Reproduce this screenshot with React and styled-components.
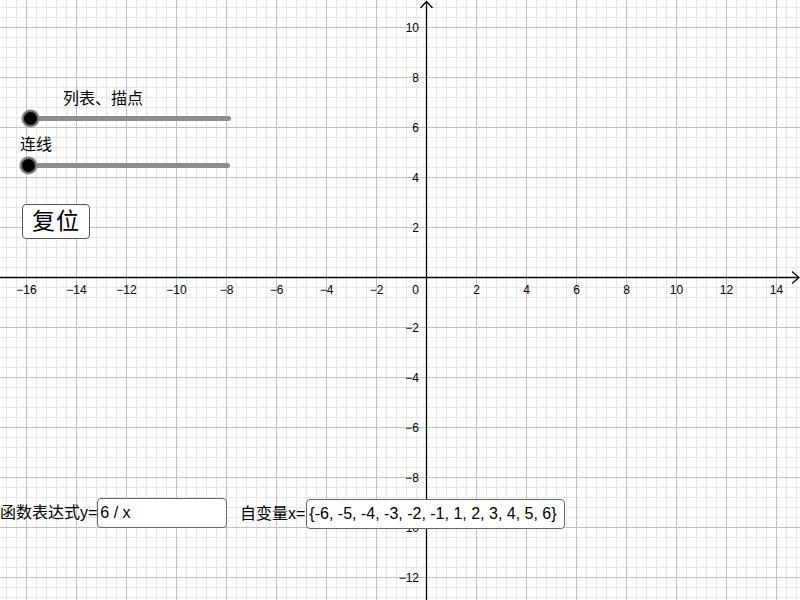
import React from "react";
import styled, { createGlobalStyle } from "styled-components";

const Global = createGlobalStyle`
  html, body { margin: 0; padding: 0; background: #fff; overflow: hidden; }
  body { font-family: "Liberation Sans", "Noto Sans CJK SC", sans-serif; }
`;

const FONT = `"Liberation Sans", "Noto Sans CJK SC", sans-serif`;

const Canvas = styled.div`
  position: relative;
  width: 800px;
  height: 600px;
  background: #fff;
  overflow: hidden;
  font-family: ${FONT};
  color: #000;
`;

const GraphSvg = styled.svg`
  position: absolute;
  inset: 0;
  display: block;
`;

const SliderBox = styled.div`
  position: absolute;
  left: ${(p) => p.$left}px;
  top: ${(p) => p.$top}px;
  width: 230px;
`;

const SliderLabel = styled.div`
  font-size: 16px;
  line-height: 20px;
  height: 20px;
  padding-left: ${(p) => p.$indent}px;
  white-space: nowrap;
`;

const Track = styled.div`
  position: relative;
  margin-top: ${(p) => p.$gap}px;
  margin-left: 8px;
  width: ${(p) => p.$len}px;
  height: 5px;
  border-radius: 3px;
  background: #8d8d8d;
`;

const Knob = styled.div`
  position: absolute;
  left: -8.5px;
  top: -6px;
  width: 13px;
  height: 13px;
  border-radius: 50%;
  background: #000;
  border: 2px solid #6e6e6e;
  box-shadow: 0 0 0 1px rgba(150, 150, 150, 0.5);
`;

const ResetButton = styled.button`
  position: absolute;
  left: 22px;
  top: 204px;
  width: 68px;
  height: 35px;
  padding: 0;
  background: #fff;
  border: 1px solid #555;
  border-radius: 4px;
  font-family: ${FONT};
  font-size: 23px;
  line-height: 33px;
  color: #000;
  letter-spacing: 1px;
  cursor: pointer;
`;

const InputRow = styled.div`
  position: absolute;
  left: ${(p) => p.$left}px;
  top: ${(p) => p.$top}px;
  display: flex;
  align-items: center;
  white-space: nowrap;
`;

const FieldLabel = styled.span`
  font-size: 16px;
  line-height: 30px;
  margin-right: ${(p) => p.$gap || 0}px;
`;

const Field = styled.div`
  box-sizing: border-box;
  width: ${(p) => p.$w}px;
  height: 30px;
  border: 1px solid #666;
  border-radius: 4px;
  background: #fff;
  padding-left: 2px;
  font-size: 16px;
  line-height: 28px;
  overflow: hidden;
`;

const OX = 426;
const OY = 277;
const U = 25;

function Graph() {
  const minorV = [];
  const majorV = [];
  for (let x = OX % 10; x <= 800; x += 10) {
    const isMajor = (x - OX) % 50 === 0;
    if (x === OX) continue;
    (isMajor ? majorV : minorV).push(x);
  }
  const minorH = [];
  const majorH = [];
  for (let y = OY % 10; y <= 600; y += 10) {
    const isMajor = (y - OY) % 50 === 0;
    if (y === OY) continue;
    (isMajor ? majorH : minorH).push(y);
  }
  const xLabels = [];
  for (let k = -16; k <= 14; k += 2) if (k !== 0) xLabels.push(k);
  const yLabels = [];
  for (let k = -12; k <= 10; k += 2) if (k !== 0) yLabels.push(k);
  const fmt = (k) => (k < 0 ? "\u2212" + Math.abs(k) : String(k));

  return (
    <GraphSvg width="800" height="600" viewBox="0 0 800 600">
      <g stroke="#e6e6e6" strokeWidth="1" shapeRendering="crispEdges">
        {minorV.map((x) => (
          <line key={"mv" + x} x1={x + 0.5} y1="0" x2={x + 0.5} y2="600" />
        ))}
        {minorH.map((y) => (
          <line key={"mh" + y} x1="0" y1={y + 0.5} x2="800" y2={y + 0.5} />
        ))}
      </g>
      <g stroke="#c0c0c0" strokeWidth="1" shapeRendering="crispEdges">
        {majorV.map((x) => (
          <line key={"Mv" + x} x1={x + 0.5} y1="0" x2={x + 0.5} y2="600" />
        ))}
        {majorH.map((y) => (
          <line key={"Mh" + y} x1="0" y1={y + 0.5} x2="800" y2={y + 0.5} />
        ))}
      </g>
      <g stroke="#000" strokeWidth="1.3" fill="none">
        <line x1="0" y1={OY + 0.5} x2="799" y2={OY + 0.5} />
        <line x1={OX + 0.5} y1="1" x2={OX + 0.5} y2="600" />
        <polyline points={`792,${OY - 5.5} 799,${OY + 0.5} 792,${OY + 6.5}`} />
        <polyline points={`${OX - 5.5},8 ${OX + 0.5},1.5 ${OX + 6.5},8`} />
      </g>
      <g fontFamily={FONT} fontSize="12" fill="#000">
        {xLabels.map((k) => (
          <text key={"xl" + k} x={OX + k * U + 0.5} y={OY + 16.5} textAnchor="middle">
            {fmt(k)}
          </text>
        ))}
        <text x={OX - 7} y={OY + 16.5} textAnchor="end">0</text>
        {yLabels.map((k) => (
          <text key={"yl" + k} x={OX - 7} y={OY - k * U + 5} textAnchor="end">
            {fmt(k)}
          </text>
        ))}
      </g>
    </GraphSvg>
  );
}

function Slider({ left, top, label, indent, len, gap }) {
  return (
    <SliderBox $left={left} $top={top}>
      <SliderLabel $indent={indent}>{label}</SliderLabel>
      <Track $gap={gap} $len={len}>
        <Knob />
      </Track>
    </SliderBox>
  );
}

export default function App() {
  return (
    <>
      <Global />
      <Canvas>
        <Graph />
        <Slider left={22} top={89} gap={7} label="列表、描点" indent={41} len={201} />
        <Slider left={20} top={135} gap={8} label="连线" indent={-3} len={202} />
        <ResetButton>复位</ResetButton>
        <InputRow $left={0} $top={498}>
          <FieldLabel>函数表达式y=</FieldLabel>
          <Field $w={130}>6 / x</Field>
        </InputRow>
        <InputRow $left={240} $top={499}>
          <FieldLabel $gap={1}>自变量x=</FieldLabel>
          <Field $w={259}>{"{-6, -5, -4, -3, -2, -1, 1, 2, 3, 4, 5, 6}"}</Field>
        </InputRow>
      </Canvas>
    </>
  );
}
